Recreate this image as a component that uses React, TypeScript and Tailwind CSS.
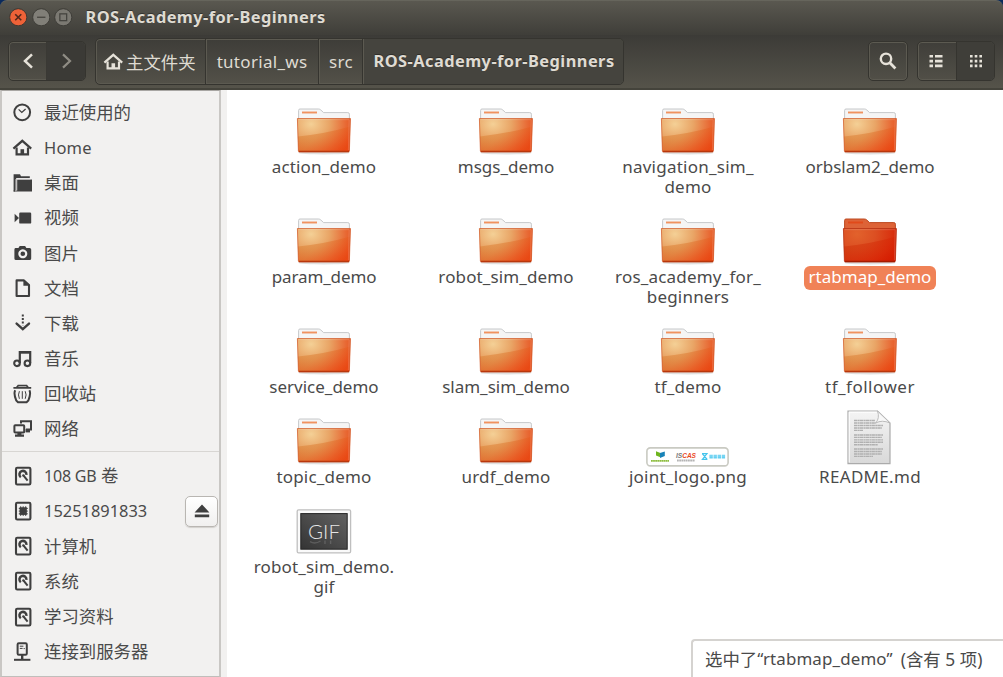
import type { ReactNode } from "react";

/* ---------- symbolic icons ---------- */

const ink = "#3f3f3f";

function Glyph({ children, className = "" }: { children: ReactNode; className?: string }) {
  return (
    <svg width="20" height="20" viewBox="0 0 20 20" fill="none" className={`shrink-0 ${className}`}>
      {children}
    </svg>
  );
}

const ClockIcon = () => (
  <Glyph>
    <circle cx="10.2" cy="9.3" r="7.9" stroke={ink} strokeWidth="2" />
    <path d="M6.6 6.4 9.8 9.4 13.6 6" stroke={ink} strokeWidth="1.3" />
  </Glyph>
);

const HouseIcon = ({ color = ink }: { color?: string }) => (
  <Glyph>
    <path d="M1.4 10.6 10.3 2.8 19.2 10.6" stroke={color} strokeWidth="2.2" />
    <path d="M4.6 9.6V16.4H16V9.6" stroke={color} strokeWidth="2.2" />
    <path d="M8.5 16.5V11.2H12.1V16.5Z" fill={color} />
  </Glyph>
);

const DesktopIcon = () => (
  <Glyph>
    <path d="M1.6 1.2H8L9 3.2H17.8V5.2H4.2V17H3V18.5H1.6Z" fill={ink} />
    <path d="M3.4 6H4.6V17H3.4Z" fill="#b9b8b7" />
    <path d="M5.2 6.6H20V18.6H1.6V17.4H5.2Z" fill={ink} />
    <path d="M4.4 5.8H18.4" stroke="#f2f1f0" strokeWidth="1.1" />
  </Glyph>
);

const VideoIcon = () => (
  <Glyph>
    <rect x="7.2" y="4.6" width="12" height="11" rx="1.2" fill={ink} />
    <path d="M2.6 5.8 7 10 2.6 14.2Z" fill={ink} />
  </Glyph>
);

const CameraIcon = () => (
  <Glyph>
    <path
      fillRule="evenodd"
      d="M3.4 5H6.4L7.7 3H13.1L14.4 5H17.6Q19.2 5 19.2 6.5V15.5Q19.2 17 17.6 17H4Q2.4 17 2.4 15.5V6.5Q2.4 5 3.4 5ZM10.8 6.3a4.5 4.5 0 1 0 .01 0Z"
      fill={ink}
    />
    <circle cx="10.8" cy="10.8" r="2.3" fill={ink} />
  </Glyph>
);

const PageIcon = () => (
  <Glyph>
    <path d="M4.6 2.4H12L17 7V18H4.6Z" stroke={ink} strokeWidth="2.1" strokeLinejoin="round" />
    <path d="M11.4 2V7.8H17.4Z" fill={ink} />
  </Glyph>
);

const DownloadIcon = () => (
  <Glyph>
    <path d="M10.8 1.4V12.5" stroke={ink} strokeWidth="2" strokeDasharray="2 1.6" />
    <path d="M4.6 10.6 10.8 16.2 17 10.6" stroke={ink} strokeWidth="2.4" strokeLinecap="round" />
  </Glyph>
);

const MusicIcon = () => (
  <Glyph>
    <circle cx="5" cy="14.3" r="2.8" stroke={ink} strokeWidth="2.1" />
    <circle cx="15.4" cy="14.3" r="2.8" stroke={ink} strokeWidth="2.1" />
    <path d="M7.8 14V3.2H18.2V14" stroke={ink} strokeWidth="2.2" />
    <path d="M7.4 2.2H18.8V4.6H7.4Z" fill={ink} />
  </Glyph>
);

const TrashIcon = () => (
  <Glyph>
    <path d="M5.8 .8H15L16.8 3H19.2V4.7H1.4V3H4Z" fill={ink} />
    <path d="M6.4 2.5H14.4" stroke="#a9a8a7" strokeWidth="1" />
    <path d="M3.2 6.2Q1.4 9.5 4.2 16.4L6 18.2H14.6L16.4 16.4Q19.2 9.5 17.4 6.2" stroke={ink} strokeWidth="2" />
    <path d="M7.4 7.2Q5.6 10.8 7.4 14.8M10.3 7.2V14.8M13.2 7.2Q15 10.8 13.2 14.8" stroke={ink} strokeWidth="1" />
  </Glyph>
);

const NetworkIcon = () => (
  <Glyph>
    <path d="M9 4.4V2.2H19V10.4H14" stroke={ink} strokeWidth="2" />
    <path d="M13.6 10H18V13.4H13.6Z" fill={ink} />
    <rect x="2.4" y="6.2" width="9.8" height="7.4" rx="0.8" stroke={ink} strokeWidth="2" />
    <path d="M5.4 14H9.4V15.6H12V17.8H3V15.6H5.4Z" fill={ink} />
  </Glyph>
);

const DriveIcon = () => (
  <Glyph>
    <rect x="4" y="1.7" width="14.4" height="16.8" rx="1.2" stroke={ink} strokeWidth="2.1" />
    <path d="M8.8 11.2A3.5 3.5 0 1 1 14.4 8.8" stroke={ink} strokeWidth="2.5" />
    <path d="M11.6 9.6 15.6 14.6" stroke={ink} strokeWidth="2" />
    <circle cx="11.4" cy="9.4" r="1.2" fill={ink} />
  </Glyph>
);

const ChipIcon = () => (
  <Glyph>
    <rect x="4" y="1.7" width="14.4" height="16.8" rx="1.2" stroke={ink} strokeWidth="2.1" />
    <rect x="7.6" y="6.3" width="7.2" height="7.6" fill={ink} />
    <path d="M6.8 7.4H15.8M6.8 10.1H15.8M6.8 12.8H15.8M8.7 5.3V14.9M11.2 5.3V14.9M13.7 5.3V14.9" stroke={ink} />
  </Glyph>
);

const ServerIcon = () => (
  <Glyph>
    <rect x="5.6" y="1.2" width="9.2" height="11.6" rx="1.2" stroke={ink} strokeWidth="2" />
    <path d="M7.8 4.2H11.4M7.8 6.4H10.6M11.6 6.6H12.8" stroke={ink} strokeWidth="1" />
    <path d="M10.2 13V18" stroke={ink} strokeWidth="2.4" />
    <path d="M2 17.8H18.4" stroke={ink} strokeWidth="2" />
  </Glyph>
);

/* ---------- file icons ---------- */

function Folder({ selected = false }: { selected?: boolean }) {
  const id = selected ? "sel" : "std";
  return (
    <svg width="56" height="48" viewBox="0 0 56 48" className="mr-px mb-px">
      <defs>
        <radialGradient id={`face-${id}`} gradientUnits="userSpaceOnUse" cx="15" cy="16" r="46" gradientTransform="translate(0 3) scale(1 .82)">
          <stop offset="0" stopColor={selected ? "#e2622c" : "#f4d096"} />
          <stop offset=".4" stopColor={selected ? "#dc4f22" : "#e9a566"} />
          <stop offset=".75" stopColor={selected ? "#d93310" : "#e86a35"} />
          <stop offset="1" stopColor={selected ? "#cf1d02" : "#e44a17"} />
        </radialGradient>
        <linearGradient id={`low-${id}`} x1="0" x2="1" y1="0" y2=".5">
          <stop offset="0" stopColor={selected ? "#c93406" : "#d98232"} stopOpacity=".5" />
          <stop offset=".45" stopColor={selected ? "#d22e08" : "#dc7a30"} stopOpacity=".5" />
          <stop offset="1" stopColor={selected ? "#dc1e00" : "#ee4710"} stopOpacity=".45" />
        </linearGradient>
      </defs>
      <ellipse cx="28" cy="44.8" rx="26" ry="1.6" fill="#000" opacity=".12" />
      <path
        d="M2.6 12V2.4Q2.6 1 4 1H22.4Q23.8 1 24.8 2L27.6 4.6H51.8Q53.4 4.6 53.4 6.2V12Z"
        fill={selected ? "#dd6337" : "#f5f5f5"}
        stroke={selected ? "#bd4a22" : "#c6c8ca"}
      />
      <path d="M6 4.5H21" stroke={selected ? "#e14a1a" : "#f0925f"} strokeWidth="1.9" />
      <path d="M1.2 10.4H54.6L53.5 43Q53.4 44.1 52.2 44.1H3.6Q2.4 44.1 2.3 43Z" fill={`url(#face-${id})`} />
      <path d="M1.9 28.4Q30 25.5 54 18.4L53.2 43.4H2.8Z" fill={`url(#low-${id})`} />
      <path
        d="M1.4 10.5H54.4L53.4 42.8Q53.3 43.8 52.2 43.8H3.6Q2.5 43.8 2.4 42.8Z"
        fill="none"
        stroke={selected ? "#b23012" : "#d15a2a"}
        strokeWidth=".9"
        opacity=".8"
      />
      <path d="M2.6 11.7H53.2L52.4 42" fill="none" stroke="#fff" strokeWidth=".8" opacity=".2" />
      <path d="M2.8 43.4H53" stroke={selected ? "#a51b00" : "#b9370c"} strokeWidth="1.5" />
    </svg>
  );
}

const LogoThumb = () => (
  <svg width="83" height="20" viewBox="0 0 83 20" className="mr-[2px]">
    <rect x=".9" y=".9" width="81.2" height="18" rx="3.4" fill="#fff" stroke="#c9cac2" strokeWidth="1.6" />
    <path d="M10 4.3 14.4 6V10.2L10 8.4Z" fill="#6fb51f" />
    <path d="M14 6 18.8 4.6V9L14 11Z" fill="#1883b8" />
    <path d="M5 13.9H23" stroke="#8dbd3e" strokeWidth="1.6" strokeDasharray="1.8 .3" />
    <text x="30" y="10.6" fontFamily="Liberation Sans" fontSize="6.8" fontWeight="700" fontStyle="italic" fill="#e9481c" textLength="20" lengthAdjust="spacingAndGlyphs">
      <tspan fill="#777">IS</tspan>CAS
    </text>
    <path d="M31 13.6H49" stroke="#b4b4b4" strokeWidth="2" strokeDasharray="1.8 .4" />
    <path d="M56 6.6H61L56.4 12.4H61.4M56.4 6.8 61 12.2" stroke="#45c4ec" strokeWidth="1.2" fill="none" />
    <path d="M63.4 9.6H79.4" stroke="#64d0f2" strokeWidth="3.8" strokeDasharray="3.4 .7" />
    <path d="M63.4 9H79.4" stroke="#fff" strokeWidth=".5" opacity=".5" />
  </svg>
);

const TextFile = () => (
  <svg width="44" height="55" viewBox="0 0 44 55" className="mr-[2px] mb-[2px]">
    <defs>
      <linearGradient id="sheet" x1="0" x2="0" y1="0" y2="1">
        <stop offset="0" stopColor="#f4f4f4" />
        <stop offset="1" stopColor="#d9d9d9" />
      </linearGradient>
    </defs>
    <path d="M1 1H30.5L43 13V53.6H1Z" fill="url(#sheet)" stroke="#ababab" strokeWidth="1.2" />
    <path d="M2.2 2.2H29.8M2.2 2.2V52.4" stroke="#fff" fill="none" />
    <g stroke="#b0b0b0" strokeWidth="1.4" strokeDasharray="3.2 .4 2 .3">
      <path d="M7 10.5H28M7 13H29M7 15.5H36M7 18H35M7 20.4H16" />
      <path d="M7 25H36M7 27.4H35M7 29.9H36M7 32.3H36M7 34.8H31" />
      <path d="M7 39H36M7 41.5H35M7 44H35M7 46.4H26" />
    </g>
    <path d="M30.5 1Q33 8 28.8 13Q35 9.5 43 13Z" fill="#f8f8f8" stroke="#b6b6b6" strokeWidth=".9" />
  </svg>
);

const GifFile = () => (
  <svg width="56" height="46" viewBox="0 0 56 46" className="mr-px mb-[2px]">
    <defs>
      <linearGradient id="gifbg" x1="0" x2="1" y1="1" y2="0">
        <stop offset="0" stopColor="#343434" />
        <stop offset="1" stopColor="#626262" />
      </linearGradient>
    </defs>
    <rect x="1.2" y=".8" width="53.4" height="43" rx="1.4" fill="#fafafa" stroke="#bfbfbf" strokeWidth="1.3" />
    <rect x="4.8" y="4.6" width="46.4" height="35.6" fill="url(#gifbg)" stroke="#242424" />
    <text x="12" y="29.6" fontFamily="Lato" fontWeight="300" fontSize="20.5" fill="#e6e6e6" textLength="32" lengthAdjust="spacingAndGlyphs">GIF</text>
    <path d="M14 32.6Q19 35.6 24.5 32M29 31.6V35M34.6 31.6V35" stroke="#aaa" strokeWidth="1.4" opacity=".28" fill="none" />
  </svg>
);

/* ---------- header ---------- */

function TitleBar() {
  return (
    <div className="flex h-[35px] items-center rounded-t-[7px] border-t border-[#66655c] bg-linear-to-b from-[#5a5850] to-[#3f3e39] pb-[2px] pl-[9px]">
      <div className="flex gap-[4px]">
        <svg width="18.5" height="18.5" viewBox="0 0 19 19">
          <circle cx="9.5" cy="9.5" r="8.8" fill="#ee6238" stroke="#35342f" strokeWidth=".9" />
          <path d="M6.4 6.4 12.6 12.6M12.6 6.4 6.4 12.6" stroke="#55281b" strokeWidth="1.7" />
        </svg>
        <svg width="18.5" height="18.5" viewBox="0 0 19 19">
          <circle cx="9.5" cy="9.5" r="8.8" fill="#817f78" stroke="#393833" strokeWidth=".9" />
          <path d="M5.2 9.5H13.8" stroke="#44433e" strokeWidth="1.3" />
        </svg>
        <svg width="18.5" height="18.5" viewBox="0 0 19 19">
          <circle cx="9.5" cy="9.5" r="8.8" fill="#7b7972" stroke="#393833" strokeWidth=".9" />
          <rect x="6" y="6" width="7" height="7" fill="none" stroke="#44433e" strokeWidth="1.3" />
        </svg>
      </div>
      <span className="ml-[13px] text-[16.4px] leading-5 font-bold tracking-[0.4px] text-[#dfdbd2] [text-shadow:0_-1px_0_#33322e]">
        ROS-Academy-for-Beginners
      </span>
    </div>
  );
}

const frame = "rounded-[5px] border border-[#35342f] shadow-[inset_0_0_0_1px_#5c5a51]";

function Toolbar() {
  return (
    <div className="flex h-[55px] items-start border-b-2 border-[#44433b] bg-linear-to-b from-[#3c3b37] to-[#55534a] pl-[8px]">
      <div className={`mt-[6px] flex h-[40px] w-[78px] overflow-hidden ${frame}`}>
        <div className="flex w-[37px] items-center justify-center">
          <svg width="14" height="16" viewBox="0 0 14 16" fill="none">
            <path d="M11 1.4 4 8 11 14.6" stroke="#e6e2d9" strokeWidth="2.5" />
          </svg>
        </div>
        <div className="flex flex-1 items-center justify-center border-l border-[#3a3934] bg-[#3b3a36]">
          <svg width="14" height="16" viewBox="0 0 14 16" fill="none">
            <path d="M4 1.4 11 8 4 14.6" stroke="#8f8c84" strokeWidth="2.2" />
          </svg>
        </div>
      </div>
      <div className={`mt-[3px] ml-[9px] flex h-[47px] w-[529px] overflow-hidden text-[17px] text-[#dfdbd2] ${frame}`}>
        <div className="flex w-[110px] items-center border-r border-[#35342f] pl-[7px]">
          <HouseIcon color="#e6e2d9" />
          <span className="ml-[3px] pt-px text-[17.4px]">主文件夹</span>
        </div>
        <div className="flex w-[113px] items-center justify-center border-r border-[#35342f] shadow-[inset_1px_0_0_#5c5a51]">
          <span className="tracking-[0.3px]">tutorial_ws</span>
        </div>
        <div className="flex w-[44px] items-center justify-center border-r border-[#35342f] shadow-[inset_1px_0_0_#5c5a51]">
          <span className="ml-px tracking-[0.3px]">src</span>
        </div>
        <div className="flex flex-1 items-center justify-center bg-[#45443e] text-[16.4px] font-bold tracking-[0.44px] shadow-[inset_1px_0_0_#5c5a51]">
          <span className="ml-[2px] [text-shadow:0_-1px_0_#2f2e2a]">ROS-Academy-for-Beginners</span>
        </div>
      </div>
      <div className={`mt-[6px] ml-[244px] flex h-[40px] w-[40px] items-center justify-center ${frame}`}>
        <svg width="20" height="20" viewBox="0 0 20 20" fill="none">
          <circle cx="8" cy="7.8" r="5.2" stroke="#e6e2d9" strokeWidth="2.4" />
          <path d="M11.8 11.8 17.4 17.4" stroke="#e6e2d9" strokeWidth="2.8" />
        </svg>
      </div>
      <div className={`mt-[6px] ml-[9px] flex h-[40px] w-[78px] overflow-hidden ${frame}`}>
        <div className="flex w-[38px] items-center justify-center pr-[2px]">
          <svg width="14" height="14" viewBox="0 0 14 14" fill="#e6e2d9">
            <path d="M.5 1H4V3.6H.5ZM6 1H13.5V3.6H6ZM.5 5.8H4V8.4H.5ZM6 5.8H13.5V8.4H6ZM.5 10.6H4V13.2H.5ZM6 10.6H13.5V13.2H6Z" />
          </svg>
        </div>
        <div className="flex flex-1 items-center justify-center border-l border-[#35342f] bg-[#3f3e39]">
          <svg width="14" height="14" viewBox="0 0 14 14" fill="#e6e2d9">
            <path d="M1 1H3.6V3.6H1ZM5.7 1H8.3V3.6H5.7ZM10.4 1H13V3.6H10.4ZM1 5.8H3.6V8.4H1ZM5.7 5.8H8.3V8.4H5.7ZM10.4 5.8H13V8.4H10.4ZM1 10.6H3.6V13.2H1ZM5.7 10.6H8.3V13.2H5.7ZM10.4 10.6H13V13.2H10.4Z" />
          </svg>
        </div>
      </div>
    </div>
  );
}

/* ---------- sidebar ---------- */

type Place = { label: ReactNode; icon: () => ReactNode; eject?: boolean };

const places: Place[] = [
  { label: "最近使用的", icon: ClockIcon },
  { label: <span className="text-[16.5px] tracking-[0.2px]">Home</span>, icon: () => <HouseIcon /> },
  { label: "桌面", icon: DesktopIcon },
  { label: "视频", icon: VideoIcon },
  { label: "图片", icon: CameraIcon },
  { label: "文档", icon: PageIcon },
  { label: "下载", icon: DownloadIcon },
  { label: "音乐", icon: MusicIcon },
  { label: "回收站", icon: TrashIcon },
  { label: "网络", icon: NetworkIcon },
];

const devices: Place[] = [
  { label: <><span className="text-[16px] tracking-[-0.2px]">108 GB</span> 卷</>, icon: DriveIcon },
  { label: <span className="text-[16.4px]">15251891833</span>, icon: ChipIcon, eject: true },
  { label: "计算机", icon: DriveIcon },
  { label: "系统", icon: DriveIcon },
  { label: "学习资料", icon: DriveIcon },
  { label: "连接到服务器", icon: ServerIcon },
];

function PlaceRow({ label, icon: Icon, eject }: Place) {
  return (
    <li className="flex h-[35.15px] items-center pr-px pl-[9.5px]">
      <Icon />
      <span className="ml-[12.5px] pb-px text-[17.4px] leading-6 whitespace-nowrap">{label}</span>
      {eject && (
        <button className="ml-auto flex h-[31px] w-[33px] items-center justify-center rounded-[5px] border border-[#b9b6b2] bg-linear-to-b from-white to-[#f1f0ef] shadow-[0_1px_1px_#d2d0cd]">
          <svg width="16" height="14" viewBox="0 0 16 14" fill={ink}>
            <path d="M8 .4 15.4 8.4H.6ZM.8 10.6H15.2V13.2H.8Z" />
          </svg>
        </button>
      )}
    </li>
  );
}

function Sidebar() {
  return (
    <nav className="flex w-[227px] shrink-0 bg-[#f2f1f0]">
      <div className="h-[587px] w-[221px] border-x-2 border-t border-b border-[#c9c7c4] border-t-[#a8a6a3] border-b-[#c0bebb] pt-[4px]">
        <ul>
          {places.map((p, i) => (
            <PlaceRow key={i} {...p} />
          ))}
        </ul>
        <div className="mt-[5px] mb-[6px] h-px bg-[#d8d6d3]" />
        <ul>
          {devices.map((p, i) => (
            <PlaceRow key={i} {...p} />
          ))}
        </ul>
      </div>
    </nav>
  );
}

/* ---------- files ---------- */

type Entry = { lines: string[]; kind?: "logo" | "text" | "gif"; selected?: boolean; tracking?: string };

const entries: Entry[] = [
  { lines: ["action_demo"], tracking: "tracking-[0.15px]" },
  { lines: ["msgs_demo"] },
  { lines: ["navigation_sim_", "demo"], tracking: "tracking-[0.25px]" },
  { lines: ["orbslam2_demo"] },
  { lines: ["param_demo"], tracking: "tracking-[-0.12px]" },
  { lines: ["robot_sim_demo"], tracking: "tracking-[0.12px]" },
  { lines: ["ros_academy_for_", "beginners"], tracking: "tracking-[0.2px]" },
  { lines: ["rtabmap_demo"], selected: true },
  { lines: ["service_demo"] },
  { lines: ["slam_sim_demo"] },
  { lines: ["tf_demo"], tracking: "tracking-[0.2px]" },
  { lines: ["tf_follower"], tracking: "tracking-[0.5px]" },
  { lines: ["topic_demo"], tracking: "tracking-[0.2px]" },
  { lines: ["urdf_demo"], tracking: "tracking-[0.2px]" },
  { lines: ["joint_logo.png"], kind: "logo", tracking: "tracking-[0.25px]" },
  { lines: ["README.md"], kind: "text", tracking: "tracking-[0.3px]" },
  { lines: ["robot_sim_demo.", "gif"], kind: "gif", tracking: "tracking-[0.17px]" },
];

function FileItem({ lines, kind, selected, tracking = "tracking-normal" }: Entry) {
  return (
    <div className="flex flex-col items-center">
      <div className="flex h-[60px] items-end justify-center">
        {kind === "logo" ? <LogoThumb /> : kind === "text" ? <TextFile /> : kind === "gif" ? <GifFile /> : <Folder selected={selected} />}
      </div>
      <div className={selected ? "-mt-px -mb-[3px] rounded-[6px] bg-[#f08257] px-[5px] pt-px pb-[3px] text-white" : ""}>
        {lines.map((line) => (
          <div key={line} className={`text-center text-[17px] leading-5 whitespace-nowrap ${tracking}`}>
            {line}
          </div>
        ))}
      </div>
    </div>
  );
}

export default function App() {
  return (
    <div className="flex h-[677px] w-[1003px] flex-col overflow-hidden bg-[#0a2a5c] font-['Noto_Sans','Noto_Sans_CJK_SC',sans-serif] text-[#4a4a4a]">
      <TitleBar />
      <Toolbar />
      <div className="relative flex h-[587px] bg-white">
        <Sidebar />
        <main className="grid w-[734px] grid-cols-[repeat(4,182px)] content-start gap-y-[10px] pt-[7px] pl-[6px]">
          {entries.map((e) => (
            <FileItem key={e.lines[0]} {...e} />
          ))}
        </main>
        <div className="absolute right-0 bottom-0 flex h-[38px] w-[312px] items-center rounded-tl-[4px] border-t-2 border-l-2 border-[#d5d3d0] bg-white pl-[12px] text-[17.4px] whitespace-nowrap">
          选中了<span className="text-[16.9px] tracking-[0.15px]">“rtabmap_demo”</span>
          <span className="ml-[8px]">(含有 5 项)</span>
        </div>
      </div>
    </div>
  );
}
